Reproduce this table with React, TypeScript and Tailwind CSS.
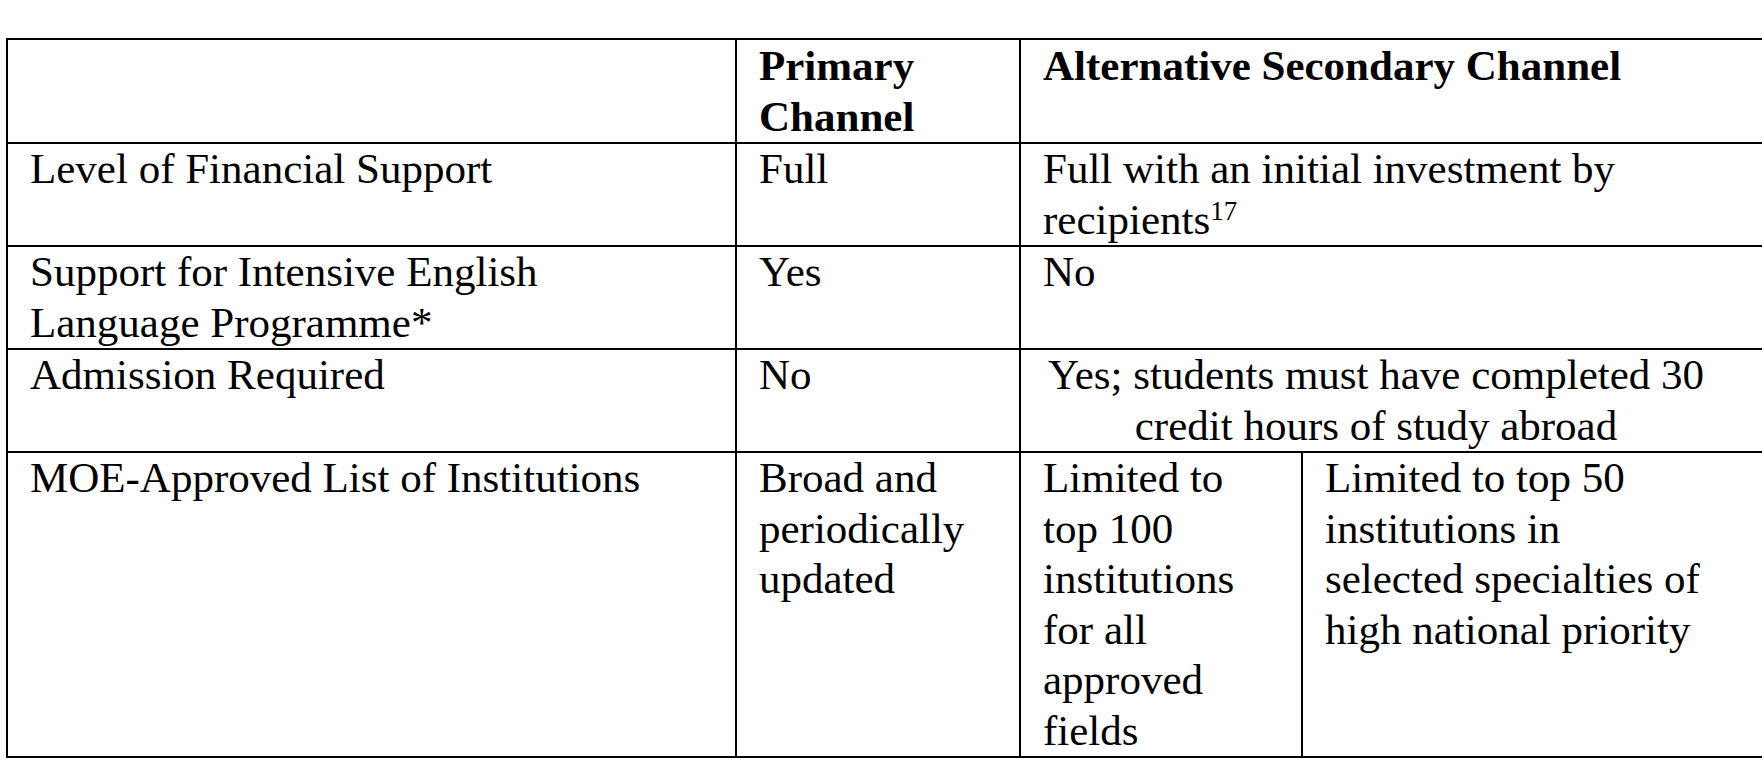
const cell = "border-r-2 border-b-2 border-black pl-[22px] pr-[21px]";

const rows = [
  { label: "Level of Financial Support", primary: "Full" },
  { label: "Support for Intensive English Language Programme*", primary: "Yes" },
  { label: "Admission Required", primary: "No" },
];

export default function App() {
  return (
    <div
      className="w-[1762px] h-[761px] overflow-hidden bg-white text-black"
      style={{ fontFamily: '"Liberation Serif", "Times New Roman", serif' }}
    >
      <div className="ml-[6px] mt-[38px] grid w-max grid-cols-[729px_284px_282px_480px] border-l-2 border-t-2 border-black text-[43px] leading-[50.5px]">
        {/* header */}
        <div className={`${cell} pr-[40px]`} />
        <div className={`${cell} pt-[1px] font-bold`}>Primary Channel</div>
        <div className={`${cell} col-span-2 pt-[1px] font-bold`}>Alternative Secondary Channel</div>

        {/* level of support */}
        <div className={`${cell} pr-[40px]`}>{rows[0].label}</div>
        <div className={cell}>{rows[0].primary}</div>
        <div className={`${cell} col-span-2`}>
          Full with an initial investment by recipients
          <sup className="text-[27px]">17</sup>
        </div>

        {/* english programme */}
        <div className={`${cell} pr-[40px]`}>{rows[1].label}</div>
        <div className={cell}>{rows[1].primary}</div>
        <div className={`${cell} col-span-2`}>No</div>

        {/* admission */}
        <div className={`${cell} pr-[40px]`}>{rows[2].label}</div>
        <div className={cell}>{rows[2].primary}</div>
        <div className={`${cell} col-span-2`}>
          <div className="w-[666px] text-center">
            Yes; students must have completed 30 credit hours of study abroad
          </div>
        </div>

        {/* institutions */}
        <div className={`${cell} pr-[40px]`}>MOE-Approved List of Institutions</div>
        <div className={cell}>Broad and periodically updated</div>
        <div className={cell}>Limited to top 100 institutions for all approved fields</div>
        <div className={cell}>
          <div className="w-[381px]">
            Limited to top 50 institutions in selected specialties of high national priority
          </div>
        </div>
      </div>
    </div>
  );
}
